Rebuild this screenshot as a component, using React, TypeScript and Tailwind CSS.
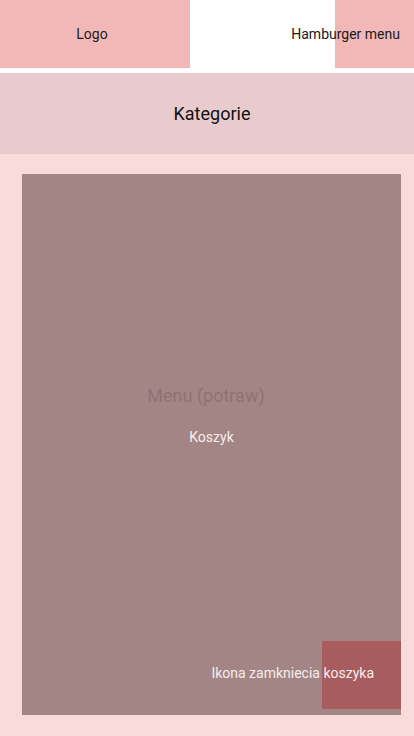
export default function App() {
  return (
    <div className="w-[414px] h-[736px] flex flex-col bg-white font-['Roboto',sans-serif] text-[14px] text-[#1a1a1a] overflow-hidden">
      <header className="h-[68px] flex">
        <div className="w-[190px] bg-[#f2b8b8] flex items-center justify-center pr-[6px]">Logo</div>
        <div className="flex-1" />
        <div className="relative w-[79px] bg-[#f2b8b8]">
          <span className="absolute right-[14px] top-1/2 -translate-y-1/2 whitespace-nowrap">Hamburger menu</span>
        </div>
      </header>
      <nav className="mt-[5px] h-[81px] bg-[#e8cccd] flex items-center justify-center pl-[10px] text-[18px] text-[#111]">
        Kategorie
      </nav>
      <main className="flex-1 bg-[#f8dcdc] pt-[20px] pb-[21px] pl-[22px] pr-[13px] flex">
        <section className="relative flex-1 bg-[#a38585] flex flex-col items-center justify-center pb-[40px]">
          <h2 className="text-[18px] text-[#8f7274] -mt-[19px] mr-[11px]">Menu (potraw)</h2>
          <p className="mt-[18px] text-[#f7eeee]">Koszyk</p>
          <div className="absolute right-0 bottom-[6px] w-[79px] h-[68px] bg-[#a85c5e]" />
          <span className="absolute right-[27px] bottom-[31px] text-[#f5eded] whitespace-nowrap">Ikona zamkniecia koszyka</span>
        </section>
      </main>
    </div>
  );
}
